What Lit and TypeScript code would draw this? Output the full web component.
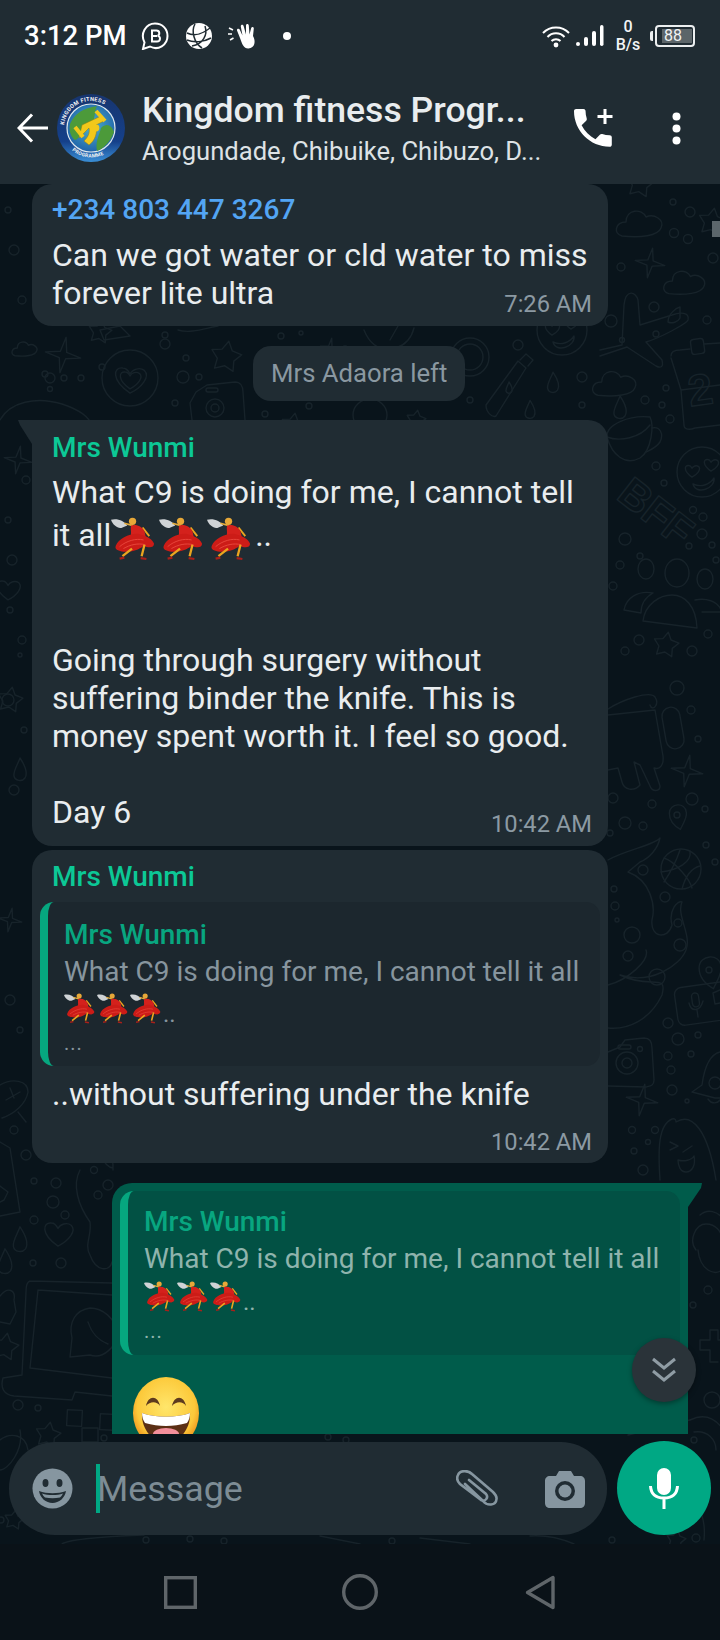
import { LitElement, html, css, svg } from "lit";
import { customElement } from "lit/decorators.js";

const starPath = (cx: number, cy: number, r: number, n = 5, inner = 0.5, rot = -90) => {
  let d = "";
  for (let i = 0; i < n * 2; i++) {
    const a = ((rot + (i * 180) / n) * Math.PI) / 180;
    const q = i % 2 ? r * inner : r;
    d += `${i ? "L" : "M"}${(cx + q * Math.cos(a)).toFixed(1)} ${(cy + q * Math.sin(a)).toFixed(1)}`;
  }
  return d + "Z";
};
const cloud = (x: number, y: number, s = 1) =>
  `M${x - 18 * s} ${y + 14 * s}C${x - 27 * s} ${y + 12 * s} ${x - 25 * s} ${y} ${x - 14 * s} ${y}C${x - 14 * s} ${y - 13 * s} ${x + 2 * s} ${y - 14 * s} ${x + 6 * s} ${y - 5 * s}C${x + 14 * s} ${y - 9 * s} ${x + 25 * s} ${y - 2 * s} ${x + 21 * s} ${y + 6 * s}C${x + 18 * s} ${y + 14 * s} ${x} ${y + 16 * s} ${x - 18 * s} ${y + 14 * s}Z`;
const drop = (x: number, y: number, s = 1) =>
  `M${x} ${y - 12 * s}C${x + 6 * s} ${y - 3 * s} ${x + 8 * s} ${y + 3 * s} ${x + 5 * s} ${y + 8 * s}C${x + 2 * s} ${y + 12 * s} ${x - 5 * s} ${y + 11 * s} ${x - 6 * s} ${y + 6 * s}C${x - 7 * s} ${y + 1 * s} ${x - 2 * s} ${y - 6 * s} ${x} ${y - 12 * s}Z`;
const heart = (x: number, y: number, s = 1) =>
  `M${x} ${y + 11 * s}C${x - 16 * s} ${y} ${x - 14 * s} ${y - 11 * s} ${x - 6 * s} ${y - 10 * s}C${x - 3 * s} ${y - 10 * s} ${x - 1 * s} ${y - 7 * s} ${x} ${y - 5 * s}C${x + 2 * s} ${y - 9 * s} ${x + 8 * s} ${y - 11 * s} ${x + 12 * s} ${y - 8 * s}C${x + 17 * s} ${y - 3 * s} ${x + 10 * s} ${y + 6 * s} ${x} ${y + 11 * s}Z`;
const pin = (x: number, y: number, s = 1) =>
  `M${x - 9 * s} ${y - 2 * s}C${x - 9 * s} ${y - 14 * s} ${x + 10 * s} ${y - 16 * s} ${x + 11 * s} ${y - 3 * s}C${x + 12 * s} ${y + 4 * s} ${x + 6 * s} ${y + 12 * s} ${x + 4 * s} ${y + 17 * s}C${x - 3 * s} ${y + 13 * s} ${x - 9 * s} ${y + 7 * s} ${x - 9 * s} ${y - 2 * s}Z`;

const DOTS: number[][] = [
  [673,202,3],[690,212,5],[674,233,4.5],[688,239,4.5],[621,267,4],[713,258,5],[654,307,5],[611,321,6],[707,320,4],[656,334,3],[622,340,2.5],
  [645,400,4],[666,388,3],[662,405,3],[670,419,4],[656,466,4],[664,483,3],[693,510,3.5],[703,517,4],[702,534,5],[689,546,3],[712,545,3],[625,539,6],[640,556,3],[620,565,4],[613,586,4],[716,560,3],
  [639,640,5],[625,651,4],[692,651,5],[708,634,4],[677,688,7],[691,710,4],[698,739,3],[692,799,6],[652,804,4],[705,809,3],[625,823,6],[643,826,4],[613,798,5],[706,845,3],[715,862,3],[665,897,5],[614,889,3],[615,906,4],[617,920,2],
  [668,1023,5],[678,1039,6],[698,1035,3],[668,1056,4],[691,1054,3],[671,1070,4],[672,1090,5],[687,1101,2],[715,1083,6],[632,1130,3.5],[655,1130,3.5],[634,1151,3],[648,1142,2.5],[643,1170,5],[610,833,3],
  [26,1155,5],[34,1181,3],[56,1183,5],[53,1202,6],[65,1215,4],[34,1220,4],[94,1170,3.5],[108,1185,5],[98,1195,4],[33,1263,3],[61,1263,5],[18,1405,5],[38,1408,3],
  [165,335,3],[281,336,3],[301,333,2],[165,344,5],[186,358,3],[102,367,3],[50,389,2.5],[81,378,3],[183,377,6],[199,377,3],[175,403,3],[265,414,3],[518,345,5],[582,377,5],[470,400,3],[309,406,3],[345,349,3],[265,351,3],[45,374,3],[50,378,5],[64,378,3],[582,405,3],
  [12,560,5],[10,610,3],[22,640,4],[8,700,6],[24,730,3],[14,790,5],[26,480,4],[8,520,3],[14,250,5],[22,300,4],[8,210,3],[20,655,2],[10,1000,5],[20,1030,3],[14,1130,4],
  [708,1290,4],[693,1305,3],[712,1400,8],[694,1440,3],[146,1540,3],[190,1539,3],[224,1541,3],[392,1541,3],[612,1540,3],[104,1438,3],[328,1437,3],[346,1440,3],[1,1520,3],[696,1538,4],
];
const STARS4: number[][] = [[650,263,15],[687,771,16],[642,1100,16],[63,355,18],[330,348,10],[10,920,12],[18,460,14]];
const STARS5: number[][] = [[640,184,14],[712,222,14],[666,645,13],[226,357,16],[100,332,12],[293,425,12],[48,1435,13],[5,1347,14],[10,700,13],[14,1520,10],[416,420,10],[676,1540,10]];
const CLOUDS: number[][] = [[640,222,1],[685,281,.9],[615,382,.95],[25,348,.55]];
const DROPS: number[][] = [[620,408,1],[553,383,.9],[530,410,.8],[20,1240,1.1],[5,1262,1.1],[20,770,1]];
const HEARTS: number[][] = [[58,1234,1.1],[8,590,.9]];

const doodles = svg`
  ${DOTS.map(([x, y, r]) => svg`<circle cx=${x} cy=${y} r=${r}></circle>`)}
  ${STARS4.map(([x, y, r]) => svg`<path d=${starPath(x, y, r, 4, 0.25, -80)}></path>`)}
  ${STARS5.map(([x, y, r]) => svg`<path d=${starPath(x, y, r, 5, 0.55, -80)}></path>`)}
  ${CLOUDS.map(([x, y, s]) => svg`<path d=${cloud(x, y, s)}></path>`)}
  ${DROPS.map(([x, y, s]) => svg`<path d=${drop(x, y, s)}></path>`)}
  ${HEARTS.map(([x, y, s]) => svg`<path d=${heart(x, y, s)}></path>`)}
  <path d="M600 350L622 345L624 305C626 288 636 292 638 300L640 325L672 315C680 312 690 312 688 320C686 324 660 338 646 342L662 360C664 368 660 368 656 366L627 347L600 356"></path>
  <path d="M668 322C668 314 676 308 680 307L680 318C678 322 672 324 668 322Z"></path>
  <path d="M671 356C671 352 675 350 680 350L690 349M704 344L720 343M671 358L681 390L684 425C684 430 690 430 695 428L720 425M681 390L720 385"></path>
  <rect x="691" y="339" width="13" height="15" rx="3" transform="rotate(-8 697 346)"></rect>
  <text x="688" y="405" class="dt" font-size="44" transform="rotate(-8 700 390)">2</text>
  <path d="M607 437C606 424 630 415 650 417C654 425 652 450 640 458C625 466 612 455 607 437Z"></path>
  <path d="M607 437C620 442 640 438 650 425M652 428C660 426 664 434 660 442C656 448 650 450 646 452"></path>
  <circle cx="702" cy="472" r="25"></circle>
  <path d=${heart(692, 471, 0.55)}></path><path d=${heart(711, 465, 0.55)}></path>
  <path d="M693 484C702 488 710 484 714 478C716 488 696 496 693 484Z"></path>
  <text x="616" y="515" class="dt" font-size="42" transform="rotate(38 640 505)">BFF</text>
  <ellipse cx="646" cy="569" rx="8" ry="10"></ellipse><ellipse cx="677" cy="573" rx="12" ry="14"></ellipse><ellipse cx="705" cy="579" rx="8" ry="10"></ellipse>
  <path d="M643 621C645 604 660 595 672 595C685 595 696 606 697 628Z"></path>
  <path d="M624 610C626 598 638 590 653 593C644 598 641 606 641 613ZM695 600C705 598 718 600 722 612L702 612"></path>
  <path d="M608 709C622 700 650 690 655 697C660 705 652 712 650 705M608 715L655 710L663 756C664 765 660 770 654 768L660 786C660 792 652 792 650 786L640 765L634 762L640 785C634 792 624 790 622 782L618 768L608 770"></path>
  <rect x="664" y="707" width="18" height="42" rx="9" transform="rotate(-10 673 728)"></rect>
  <path d=${pin(677, 815, 0.85)}></path><circle cx="677" cy="815" r="3"></circle>
  <circle cx="681" cy="869" r="20"></circle>
  <path d="M664 858C676 862 690 880 692 888M680 850C676 862 668 876 664 882M690 851C692 862 678 870 661 872M700 866C692 868 686 874 682 889"></path>
  <path d="M608 860C625 850 655 845 660 838C658 848 650 858 640 862L628 872C650 880 656 905 652 920C650 938 668 940 672 925C668 910 678 900 682 902C676 915 692 935 686 950C680 966 650 985 620 975C650 990 668 972 662 995C650 1020 628 1030 608 1028M608 985C628 980 650 960 646 950"></path>
  <circle cx="632" cy="935" r="8"></circle><circle cx="628" cy="956" r="5"></circle><circle cx="657" cy="977" r="8"></circle><circle cx="680" cy="945" r="6"></circle><circle cx="643" cy="870" r="5"></circle><circle cx="678" cy="923" r="4"></circle>
  <path d=${pin(709, 950, 1.1)} transform="translate(0 20)"></path><circle cx="709" cy="970" r="3"></circle>
  <rect x="676" y="985" width="62" height="38" rx="7" transform="rotate(-8 700 1004)"></rect>
  <rect x="692" y="993" width="7" height="14" rx="3.5" transform="rotate(-8 695 1000)"></rect>
  <path d="M689 1003C691 1012 700 1012 703 1001M697 1010L698 1017M713 993L720 990M713 993L715 1004L720 1003"></path>
  <path d="M608 1052L620 1047L625 1040L644 1038C650 1038 652 1042 652 1048L654 1080C654 1086 650 1086 646 1087L608 1086"></path>
  <circle cx="627" cy="1063" r="11"></circle><circle cx="627" cy="1063" r="5"></circle><rect x="618" y="1045" width="13" height="4" rx="2"></rect><circle cx="640" cy="1049" r="2.5"></circle>
  <path d="M720 1052C708 1055 704 1070 702 1085L692 1092L715 1098L720 1098M708 1099C712 1105 718 1103 720 1100"></path>
  <path d="M660 1180C658 1150 658 1125 672 1119C675 1118 676 1120 676 1122C692 1112 708 1130 716 1180M670 1150L678 1146L670 1142M692 1146L683 1152M678 1160C684 1162 692 1160 694 1156C696 1165 692 1172 686 1172C680 1172 678 1165 678 1160Z"></path>
  <path d="M113 1168C102 1166 100 1150 104 1150C100 1140 114 1150 113 1170M80 1170C72 1185 78 1205 90 1222C92 1235 84 1245 90 1255C96 1272 110 1272 112 1262"></path>
  <path d="M30 1281L112 1283M30 1281C26 1282 26 1288 26 1292L22 1375M38 1290L112 1295M38 1290L30 1368L112 1378M22 1375L3 1378C0 1388 4 1395 14 1396L72 1400L75 1392L112 1396"></path>
  <path d="M70 1357L90 1355C104 1360 116 1345 118 1335C116 1318 102 1308 90 1308C76 1310 68 1322 72 1338Z"></path>
  <path d="M88 1322C92 1334 98 1340 108 1344"></path>
  <rect x="67" y="1410" width="15" height="16" transform="rotate(3 74 1418)"></rect><rect x="100" y="1414" width="14" height="16" transform="rotate(3 107 1422)"></rect><rect x="82" y="1428" width="16" height="14"></rect>
  <path d="M0 1142L10 1148L20 1212L0 1216M0 1186L8 1192L4 1200L0 1202"></path>
  <path d="M0 1085C12 1078 28 1080 28 1092C26 1104 14 1114 2 1118M6 1100L20 1092M10 1088L14 1098M18 1112L26 1122"></path>
  <path d="M0 1296C8 1286 16 1290 14 1300L16 1312L10 1324L0 1322"></path>
  <circle cx="130" cy="378" r="28"></circle>
  <path d=${heart(130, 380, 1.2)}></path><path d=${heart(130, 380, 0.8)}></path>
  <path d="M190 403L196 392L207 385L235 382C240 382 243 386 243 392L245 420M192 420L190 403"></path>
  <circle cx="215" cy="408" r="9"></circle><circle cx="215" cy="408" r="4"></circle><rect x="206" y="388" width="12" height="4" rx="2"></rect>
  <circle cx="470" cy="357" r="19"></circle><circle cx="470" cy="357" r="13"></circle>
  <path d="M486 405L518 361L526 368L496 416C492 418 486 412 486 405ZM520 360L526 354L533 360L528 366"></path>
  <path d=${drop(509, 388, 0.5)}></path>
  <circle cx="562" cy="330" r="25"></circle><path d=${heart(552, 329, 0.55)}></path><path d=${heart(571, 323, 0.55)}></path><path d="M553 342C562 346 570 342 574 336C576 346 556 354 553 342Z"></path>
  <path d="M0 420C10 402 36 396 62 404C80 410 90 418 92 426"></path>
  <path d="M178 330C190 334 206 328 218 326M364 330C370 345 380 352 396 348C408 344 412 336 414 328"></path>
  <path d="M390 340L398 326M100 330L120 326L130 336L104 340Z"></path>
  <ellipse cx="370" cy="415" rx="17" ry="16"></ellipse>
  <path d="M0 1440C10 1432 26 1434 28 1450M20 1430C24 1450 8 1470 0 1470"></path>
  <path d="M62 1544C70 1538 120 1536 144 1535M320 1536L360 1544M420 1538L470 1544M530 1536C545 1535 560 1538 574 1544"></path>
  <path d="M628 1435L690 1420M694 1432C708 1430 716 1440 716 1450M690 1500C700 1505 706 1520 704 1540"></path>
  <path d="M700 1215C708 1208 718 1212 722 1218M696 1250C688 1240 696 1224 706 1224C716 1224 722 1232 722 1240M698 1250C700 1270 714 1276 722 1270"></path>
  <path d="M700 1340L710 1340L710 1330L718 1330L718 1340L722 1340M700 1340L700 1350L710 1350L710 1362L718 1362"></path>
  <path d="M690 1420C706 1412 716 1420 722 1428"></path>
`;

const dancer = svg`
  <path d="M0 3C6 1 14 4 17 9L12 11C8 13 2 9 0 3Z" fill="#cfd3d6"></path>
  <path d="M14 6.500L23 9" stroke="#e5ac3a" stroke-width="1.800" fill="none"></path>
  <circle cx="22.500" cy="4.500" r="3.800" fill="#e7a838"></circle>
  <path d="M33 11L40 20" stroke="#eba51f" stroke-width="2" fill="none"></path>
  <path d="M21 9C26 7 33 10 35 15L37 24L20 22C22 17 20 13 21 9Z" fill="#d4211c"></path>
  <path d="M5 30C8 22 22 16 30 18C38 20 44 24 45 28C45 32 40 33 34 30C28 36 14 38 8 35C5 34 4 32 5 30Z" fill="#cc1c17"></path>
  <path d="M9 31C16 25 26 22 34 24M13 33C20 29 28 27 36 29" stroke="#e8463c" stroke-width="1" fill="none"></path>
  <path d="M22 33L12 41M35 29L32 41" stroke="#eba51f" stroke-width="2.400" fill="none"></path>
  <path d="M9 43.500L14 42.500M31 43L37 44" stroke="#a8201a" stroke-width="2.200" fill="none"></path>
`;
const Dancer = (s: string) =>
  html`<svg class=${"dancer " + s} viewBox="0 0 46 46" aria-hidden="true">${dancer}</svg>`;

@customElement("app-root")
export class AppRoot extends LitElement {
  static styles = css`
    :host { display: flex; flex-direction: column; width: 720px; height: 1640px; overflow: hidden; background: #0a1218; font-family: Roboto, "Liberation Sans", sans-serif; color: #e9edef; }
    svg { display: block; flex: none; }
    header { height: 184px; background: #202c33; flex: none; position: relative; z-index: 2; display: flex; flex-direction: column; }
    .status { height: 72px; display: flex; align-items: center; padding-left: 24px; color: #fff; }
    .clock { font-size: 27.500px; font-weight: 500; line-height: 30px; margin-right: 14px; white-space: nowrap; }
    .si-b { margin-right: 17px; } .si-g { margin-right: 16px; } .si-h { margin-right: 25px; }
    .dot { width: 8px; height: 8px; border-radius: 50%; background: #fff; }
    .status-right { margin-left: auto; display: flex; align-items: center; padding-right: 25px; }
    .speed { width: 26px; margin: 0 9px 0 11px; font-size: 16px; line-height: 18px; text-align: center; font-weight: 500; color: #f2f4f5; }
    .batt { width: 40px; height: 22px; box-sizing: border-box; border: 2px solid #eceff0; border-radius: 4px; padding: 2px 1px 2px 5px; position: relative; margin-left: 5px; display: flex; }
    .batt::before { content: ""; position: absolute; left: -7px; top: 4px; width: 3px; height: 10px; background: #eceff0; border-radius: 2px 0 0 2px; }
    .batt span { flex: 1; background: #5c6569; font-size: 16px; line-height: 14px; color: #f1f3f4; padding-left: 2px; }
    .appbar { flex: 1; display: flex; align-items: center; padding: 0 0 0 17px; }
    .avatar { margin-left: 9px; margin-right: 17px; }
    .titles { width: 396px; min-width: 0; padding-top: 7px; }
    .title { font-size: 35.600px; font-weight: 500; line-height: 40px; color: #e9edef; white-space: nowrap; }
    .sub { font-size: 25.600px; line-height: 43px; color: #dde2e5; white-space: nowrap; }
    .act-call { margin-left: 36px; }
    .act-more { margin-left: 59px; }

    main { flex: 1; position: relative; background: #09141b; display: flex; flex-direction: column; min-height: 0; }
    .doodles { position: absolute; inset: 0; fill: none; stroke: #17232a; stroke-width: 1.4; stroke-linejoin: round; stroke-linecap: round; }
    .doodles text { font-family: "Liberation Sans", sans-serif; font-weight: 700; fill: none; stroke: #17232a; stroke-width: 1.4; }
    .specks { position: absolute; left: 712px; top: 37px; width: 8px; height: 16px; background: #5c666b; }
    .list { position: relative; height: 1250px; overflow: hidden; display: flex; flex-direction: column; align-items: flex-start; flex: none; }
    .list > * { flex: none; }
    .bubble { position: relative; box-sizing: border-box; width: 576px; margin-left: 32px; background: #202c33; border-radius: 20px; font-size: 32px; line-height: 38px; }
    .b1 { height: 142px; padding: 10px 20px 0; }
    .b2 { margin-top: 19px; border-top-left-radius: 0; padding: 12px 20px 0; height: 426px; }
    .b2 > .from { margin-bottom: 9px; }
    .b3 { margin-top: 4px; padding: 11px 8px 0; height: 313px; }
    .b4 { margin: 20px 0 0 112px; background: #005c4b; border-top-right-radius: 0; padding: 8px 8px 0; height: 300px; }
    .b2::before, .b4::after { content: ""; position: absolute; top: 0; width: 14px; height: 24px; background: inherit; }
    .b2::before { left: -14px; clip-path: polygon(0 0, 100% 0, 100% 100%, 2px 5px); }
    .b4::after { right: -14px; clip-path: polygon(0 0, 100% 0, calc(100% - 1px) 5px, 0 100%); }
    .from { font-size: 28px; font-weight: 500; line-height: 32px; color: #0cc896; }
    .b3 > .from { padding-left: 12px; }
    .phone { font-size: 28px; font-weight: 500; line-height: 32px; color: #53a5f3; margin-bottom: 10px; }
    .line { white-space: nowrap; }
    .emoji-line { height: 43px; display: flex; align-items: flex-end; white-space: nowrap; }
    .emoji-line .dancer { margin-bottom: -7px; margin-right: 4px; }
    .emoji-line .dancer:first-of-type { margin-left: 0; }
    .gap-84 { height: 87px; } .gap-38 { height: 38px; }
    .dancer.big { width: 44px; height: 44px; }
    .dancer.small { width: 31px; height: 31px; margin-right: 2px; }
    .time { position: absolute; right: 16px; font-size: 23.700px; line-height: 28px; color: #8c9aa3; white-space: nowrap; }
    .b1 .time { bottom: 8px; } .b2 .time { bottom: 8px; } .b3 .time { bottom: 7px; }
    .quote { box-sizing: border-box; width: 560px; height: 164px; border-left: 8px solid #06a77f; border-radius: 14px; background: #1c272e; padding: 14px 16px 0; margin-top: 0; font-size: 28px; line-height: 38px; color: #87959e; overflow: hidden; }
    .b3 .quote { margin-top: 9px; }
    .quote .from { color: #08a680; line-height: 37px; }
    .b4 .quote { background: #025144; color: #8fb4ad; width: 560px; padding-top: 13px; }
    .b4 .quote .from { color: #08a680; line-height: 36px; }
    .qdancers { display: flex; align-items: flex-end; height: 30px; margin-top: 3px; line-height: 20px; font-size: 24px; }
    .b4 .qdancers { margin-top: 4px; }
    .qmore { font-size: 20px; line-height: 38px; letter-spacing: 1px; margin-top: 0; }
    .after { padding-left: 12px; margin-top: 9px; white-space: nowrap; }
    .grin { margin: 22px 0 0 13px; }
    .system { margin: 20px 0 0 253px; height: 55px; box-sizing: border-box; padding: 0 18px; border-radius: 18px; background: #202c33; color: #8a98a1; font-size: 25.700px; line-height: 55px; white-space: nowrap; }
    .down { position: absolute; left: 632px; top: 1154px; width: 64px; height: 64px; border-radius: 50%; background: #2a3339; display: flex; align-items: center; justify-content: center; box-shadow: 0 2px 5px rgba(0,0,0,.35); }
    .composer { position: relative; flex: none; margin-top: 8px; display: flex; padding: 0 9px; gap: 10px; }
    .bar { width: 598px; height: 93px; border-radius: 46px; background: #202c33; display: flex; align-items: center; padding-left: 23px; box-sizing: border-box; }
    .caret { width: 4px; height: 49px; background: #00a884; margin-left: 23px; }
    .ph { font-size: 35.800px; color: #7d8c95; line-height: 40px; margin-right: auto; margin-left: -3px; }
    .clip { margin-right: 47px; }
    .cam { margin-right: 22px; }
    .mic { width: 94px; height: 94px; margin-top: -1px; border-radius: 50%; background: #00a884; display: flex; align-items: center; justify-content: center; }
    nav { height: 96px; flex: none; display: flex; align-items: center; padding-left: 164px; background: #0a1218; }
    nav svg { fill: none; stroke: #5f6569; stroke-width: 3.4; }
    .n2 { margin-left: 145px; } .n3 { margin-left: 147px; }
  `;

  render() {
    return html`
      <header>
        <div class="status">
          <span class="clock">3:12 PM</span>
          <svg class="si-b" width="28" height="28" viewBox="0 0 28 28" fill="none" aria-hidden="true">
            <path d="M2 27L3.500 20.500C-1 12 4.500 1.500 14 1.500C21.500 1.500 26.500 7 26.500 14C26.500 23 17 29 9 24.500Z" stroke="#fff" stroke-width="2"></path>
            <path d="M11 8.500H15.500C19 8.500 19 13.200 16.500 13.800C20 14 19.800 19.500 16 19.500H11ZM11 13.900H16" stroke="#fff" stroke-width="2"></path>
          </svg>
          <svg class="si-g" width="26" height="26" viewBox="0 0 26 26" aria-hidden="true">
            <circle cx="13" cy="13" r="13" fill="#fff"></circle>
            <path d="M1 10C9 14 18 10 24 5M9 1C5 8 8 20 16 25M19 3C22 12 17 21 6 23M1 17C8 20 18 19 25 15" fill="none" stroke="#202c33" stroke-width="1.500"></path>
          </svg>
          <svg class="si-h" width="30" height="26" viewBox="0 0 30 26" aria-hidden="true">
            <path d="M12 15L9 7.500C8.500 5.500 11 5 11.700 6.500L14.500 12.500L12.800 3.500C12.600 1.500 15 1 15.600 3L18 11.500L18 2.500C18 .5 20.700.5 20.800 2.500L21.500 11.500L23.200 5C23.800 3.200 26 3.800 25.800 5.600L25 13C28 18 27 25 20.500 25.500C16 25.800 14 21 12 15Z" fill="#fff"></path>
            <path d="M1 5L5 7M0 11L4 11M2 17L5.500 15" stroke="#fff" stroke-width="1.600"></path>
          </svg>
          <span class="dot"></span>
          <div class="status-right">
            <svg width="28" height="23" viewBox="0 0 28 23" fill="none" stroke="#fff" stroke-width="2" aria-hidden="true">
              <path d="M1 8C8 .5 20 .5 27 8M5.500 12C10 7 18 7 22.500 12M9.500 16C12 13.500 16 13.500 18.500 16"></path>
              <circle cx="14" cy="20" r="2.400" fill="#fff" stroke="none"></circle>
            </svg>
            <svg style="margin-left:6px" width="28" height="22" viewBox="0 0 28 22" fill="#fff" aria-hidden="true">
              <rect x="0" y="17" width="4" height="4" rx="2"></rect><rect x="8" y="12" width="4" height="9" rx="2"></rect><rect x="16" y="6" width="4" height="15" rx="2"></rect><rect x="24" y="0" width="3.500" height="21" rx="1.700"></rect>
            </svg>
            <div class="speed">0<br />B/s</div>
            <div class="batt"><span>88</span></div>
          </div>
        </div>
        <div class="appbar">
          <svg width="31" height="30" viewBox="0 0 31 30" fill="none" stroke="#fff" stroke-width="3" aria-hidden="true"><path d="M15 1.500L2 15L15 28.500M2.500 15H31"></path></svg>
          <svg class="avatar" width="68" height="68" viewBox="0 0 68 68" aria-hidden="true">
            <defs>
              <linearGradient id="ring" x1="0" y1="0" x2="0" y2="1"><stop offset="0" stop-color="#17356f"></stop><stop offset=".7" stop-color="#15408a"></stop><stop offset="1" stop-color="#3a8fd6"></stop></linearGradient>
              <radialGradient id="globe" cx=".5" cy=".45" r=".6"><stop offset="0" stop-color="#4fb3c9"></stop><stop offset="1" stop-color="#1c5da8"></stop></radialGradient>
              <path id="arcTop" d="M7 34A27 27 0 0 1 61 34"></path>
              <path id="arcBot" d="M6 42A29 29 0 0 0 62 42"></path>
            </defs>
            <circle cx="34" cy="34" r="34" fill="url(#ring)"></circle>
            <circle cx="34" cy="34" r="24" fill="url(#globe)" stroke="#dfe8ee" stroke-width="1.200"></circle>
            <path d="M13 30C20 16 30 14 40 12C36 20 40 28 30 34C24 36 22 46 18 46C13 42 12 36 13 30ZM44 34C50 28 55 32 57 38C54 46 48 54 40 57C38 48 42 42 44 34Z" fill="#4c9a3a"></path>
            <path d="M22 44L25 31L44 22L47 27L39 31C41 38 38 47 32 51L27 47C31 43 33 39 32 34Z" fill="#f2c81a" stroke="#8b7a12" stroke-width=".5"></path>
            <path d="M18 33L26 43M39 17L48 27" stroke="#f2c81a" stroke-width="4"></path>
            <circle cx="39" cy="34" r="3.400" fill="#f2c81a"></circle>
            <text font-size="5.600" font-weight="700" fill="#f2f2f2" font-family="Roboto, sans-serif" letter-spacing=".3"><textPath href="#arcTop" startOffset="3">KINGDOM FITNESS</textPath></text>
            <text font-size="5" font-weight="700" fill="#f2f2f2" font-family="Roboto, sans-serif" letter-spacing=".3"><textPath href="#arcBot" startOffset="17">PROGRAMME</textPath></text>
          </svg>
          <div class="titles">
            <div class="title">Kingdom fitness Progr...</div>
            <div class="sub">Arogundade, Chibuike, Chibuzo, D...</div>
          </div>
          <svg class="act-call" width="39" height="38" viewBox="0 0 39 38" aria-hidden="true">
            <path transform="translate(-6.300 -6.300) scale(2.100)" d="M6.620 10.790c1.440 2.830 3.760 5.140 6.590 6.590l2.200-2.200c.27-.27.67-.36 1.020-.24 1.120.37 2.330.57 3.570.57.55 0 1 .45 1 1V20c0 .55-.45 1-1 1-9.390 0-17-7.610-17-17 0-.55.45-1 1-1h3.500c.55 0 1 .45 1 1 0 1.250.2 2.450.57 3.570.11.35.03.74-.25 1.020l-2.200 2.200z" fill="#fff"></path>
            <path d="M31 0V15M23.500 7.500H38.500" stroke="#fff" stroke-width="3"></path>
          </svg>
          <svg class="act-more" width="9" height="33" viewBox="0 0 9 33" fill="#fff" aria-hidden="true"><circle cx="4.500" cy="4.500" r="4"></circle><circle cx="4.500" cy="16.500" r="4"></circle><circle cx="4.500" cy="28.500" r="4"></circle></svg>
        </div>
      </header>
      <main>
        <svg class="doodles" width="720" height="1360" viewBox="0 184 720 1360" aria-hidden="true">${doodles}</svg>
        <div class="specks"></div>
        <div class="list">
          <div class="bubble b1">
            <div class="phone">+234 803 447 3267</div>
            <div class="line">Can we got water or cld water to miss</div>
            <div class="line">forever lite ultra</div>
            <span class="time">7:26 AM</span>
          </div>
          <div class="system">Mrs Adaora left</div>
          <div class="bubble b2">
            <div class="from">Mrs Wunmi</div>
            <div class="line">What C9 is doing for me, I cannot tell</div>
            <div class="emoji-line">it all${Dancer("big")}${Dancer("big")}${Dancer("big")}..</div>
            <div class="gap-84"></div>
            <div class="line">Going through surgery without</div>
            <div class="line">suffering binder the knife. This is</div>
            <div class="line">money spent worth it. I feel so good.</div>
            <div class="gap-38"></div>
            <div class="line">Day 6</div>
            <span class="time">10:42 AM</span>
          </div>
          <div class="bubble b3">
            <div class="from">Mrs Wunmi</div>
            <div class="quote">
              <div class="from">Mrs Wunmi</div>
              <div class="line">What C9 is doing for me, I cannot tell it all</div>
              <div class="qdancers">${Dancer("small")}${Dancer("small")}${Dancer("small")}..</div>
              <div class="qmore">...</div>
            </div>
            <div class="after">..without suffering under the knife</div>
            <span class="time">10:42 AM</span>
          </div>
          <div class="bubble b4">
            <div class="quote">
              <div class="from">Mrs Wunmi</div>
              <div class="line">What C9 is doing for me, I cannot tell it all</div>
              <div class="qdancers">${Dancer("small")}${Dancer("small")}${Dancer("small")}..</div>
              <div class="qmore">...</div>
            </div>
            <svg class="grin" width="66" height="72" viewBox="0 0 66 72" aria-hidden="true">
              <defs><radialGradient id="face" cx=".5" cy=".42" r=".58"><stop offset="0" stop-color="#ffe66b"></stop><stop offset=".75" stop-color="#fcc93a"></stop><stop offset="1" stop-color="#ee8f1a"></stop></radialGradient></defs>
              <ellipse cx="33" cy="36" rx="33" ry="36" fill="url(#face)"></ellipse>
              <path d="M13 29C15 18 25 18 27 29C24 24 17 24 13 29ZM39 29C41 18 51 18 53 29C50 24 43 24 39 29Z" fill="#5d3a1e"></path>
              <path d="M9 36C22 41 44 41 57 36C58 52 46 66 33 66C20 66 8 52 9 36Z" fill="#5b2f14"></path>
              <path d="M9 36C22 41 44 41 57 36C57 40 56 43 54 46C40 50 26 50 12 46C10 43 9 40 9 36Z" fill="#fff"></path>
              <ellipse cx="33" cy="57" rx="13" ry="6" fill="#f28f9b"></ellipse>
            </svg>
          </div>
        </div>
        <div class="down">
          <svg width="28" height="28" viewBox="0 0 28 28" fill="none" stroke="#8f9ca4" stroke-width="3" aria-hidden="true"><path d="M3 3L14 12L25 3M3 15L14 24L25 15"></path></svg>
        </div>
        <div class="composer">
          <div class="bar">
            <svg width="41" height="41" viewBox="0 0 41 41" aria-hidden="true">
              <circle cx="20.500" cy="20.500" r="20" fill="#8696a0"></circle>
              <ellipse cx="13.500" cy="15" rx="3" ry="4" fill="#202c33"></ellipse><ellipse cx="27.500" cy="15" rx="3" ry="4" fill="#202c33"></ellipse>
              <path d="M7 23C15 26 26 26 34 23C33 30 27 35 20.500 35C14 35 8 30 7 23Z" fill="#202c33"></path>
              <path d="M10 25.500C16 27.500 25 27.500 31 25.500C30 27.500 29 28.500 28 29.500C23 30.500 18 30.500 13 29.500C12 28.500 11 27.500 10 25.500Z" fill="#8696a0"></path>
            </svg>
            <span class="caret"></span>
            <span class="ph">Message</span>
            <svg class="clip" width="42" height="38" viewBox="0 0 42 38" fill="none" stroke="#8696a0" stroke-width="2.600" stroke-linecap="round" aria-hidden="true">
              <path d="M9 14L27 31C31 36 40 36 40.500 29C41 26 39 24 37 22L16 4C12 0 4 0 2 5C0 9 2 12 4 14L25 30C29 32 33 28 30 24L13 10"></path>
            </svg>
            <svg class="cam" width="40" height="38" viewBox="0 0 40 38" aria-hidden="true">
              <path d="M5 6H11L14 1H26L29 6H35C38 6 40 8 40 11V33C40 36 38 38 35 38H5C2 38 0 36 0 33V11C0 8 2 6 5 6Z" fill="#8696a0"></path>
              <circle cx="20" cy="21" r="10" fill="#202c33"></circle><circle cx="20" cy="21" r="6.500" fill="#8696a0"></circle>
            </svg>
          </div>
          <div class="mic">
            <svg width="30" height="41" viewBox="0 0 30 41" fill="none" aria-hidden="true">
              <rect x="8" y="0" width="14" height="27" rx="7" fill="#fff"></rect>
              <path d="M1.500 18C2 27 8 30 15 30C22 30 28 27 28.500 18M15 30V41" stroke="#fff" stroke-width="3"></path>
            </svg>
          </div>
        </div>
        <div style="height:9px"></div>
      </main>
      <nav>
        <svg width="33" height="33" viewBox="0 0 33 33" aria-hidden="true"><rect x="1.700" y="1.700" width="29.600" height="29.600"></rect></svg>
        <svg class="n2" width="36" height="36" viewBox="0 0 36 36" aria-hidden="true"><circle cx="18" cy="18" r="16.300"></circle></svg>
        <svg class="n3" width="30" height="35" viewBox="0 0 30 35" aria-hidden="true"><path d="M28 2.500V32.500L2.500 17.500Z" stroke-linejoin="round"></path></svg>
      </nav>
    `;
  }
}
